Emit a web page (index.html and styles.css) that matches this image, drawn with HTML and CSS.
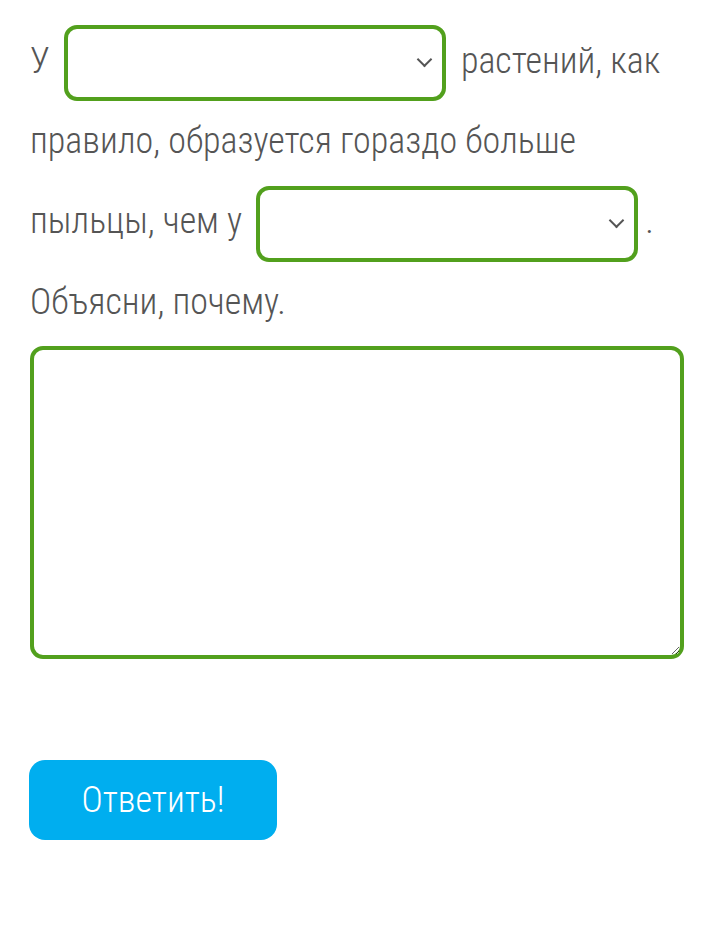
FILE: index.html
```html
<!DOCTYPE html>
<html>
	<head>
		<meta charset="utf-8">
		<meta name="viewport" content="width=device-width">
		<title>Вопрос</title>
		<link rel="stylesheet" href="styles.css">
	</head>
	<body>
		<form class="task">
			<p class="question">
				У
				<span class="pick">
					<select>
						<option></option>
						<option>ветроопыляемых</option>
						<option>насекомоопыляемых</option>
					</select>
				</span>
				растений, как правило, образуется гораздо больше пыльцы, чем у
				<span class="pick">
					<select>
						<option></option>
						<option>ветроопыляемых</option>
						<option>насекомоопыляемых</option>
					</select>
				</span>.
				Объясни, почему.
			</p>
			<textarea class="answer"></textarea>
			<button type="button" class="send">Ответить!</button>
		</form>
	</body>
</html>
```

FILE: styles.css
```css
html,body {
	margin: 0;
	padding: 0;
	background-color: #fff;
}

.task {
	padding: 0 32px 0 30px;
	font-family: 'Roboto', sans-serif;
	font-stretch: condensed;
	font-weight: 300;
	color: #555;
}

.question {
	margin: 0;
	padding-top: 21px;
	font-size: 36px;
	line-height: 80px;
}

.pick {
	display: inline-block;
	position: relative;
	vertical-align: middle;
	margin: 0 7px 0 6px;
}

.pick select {
	-webkit-appearance: none;
	appearance: none;
	display: block;
	box-sizing: border-box;
	width: 382px;
	height: 76px;
	border: 4px solid #52a01d;
	border-radius: 13px;
	background: #fff;
	font: inherit;
	outline: none;
}

/* chevron of the dropdown */
.pick::after {
	content: "";
	position: absolute;
	right: 16px;
	top: 29px;
	width: 9px;
	height: 9px;
	border-right: 2px solid #555;
	border-bottom: 2px solid #555;
	transform: rotate(45deg);
}

.answer {
	display: block;
	box-sizing: border-box;
	width: 100%;
	height: 313px;
	margin-top: 4px;
	border: 4px solid #52a01d;
	border-radius: 13px;
	resize: vertical;
	outline: none;
}

.send {
	display: block;
	margin-top: 101px;
	margin-left: -1px;
	width: 248px;
	height: 80px;
	border: 0;
	border-radius: 16px;
	background-color: #00aeef;
	color: #fff;
	font-family: 'Roboto', sans-serif;
	font-stretch: condensed;
	font-weight: 300;
	font-size: 36px;
}
```
